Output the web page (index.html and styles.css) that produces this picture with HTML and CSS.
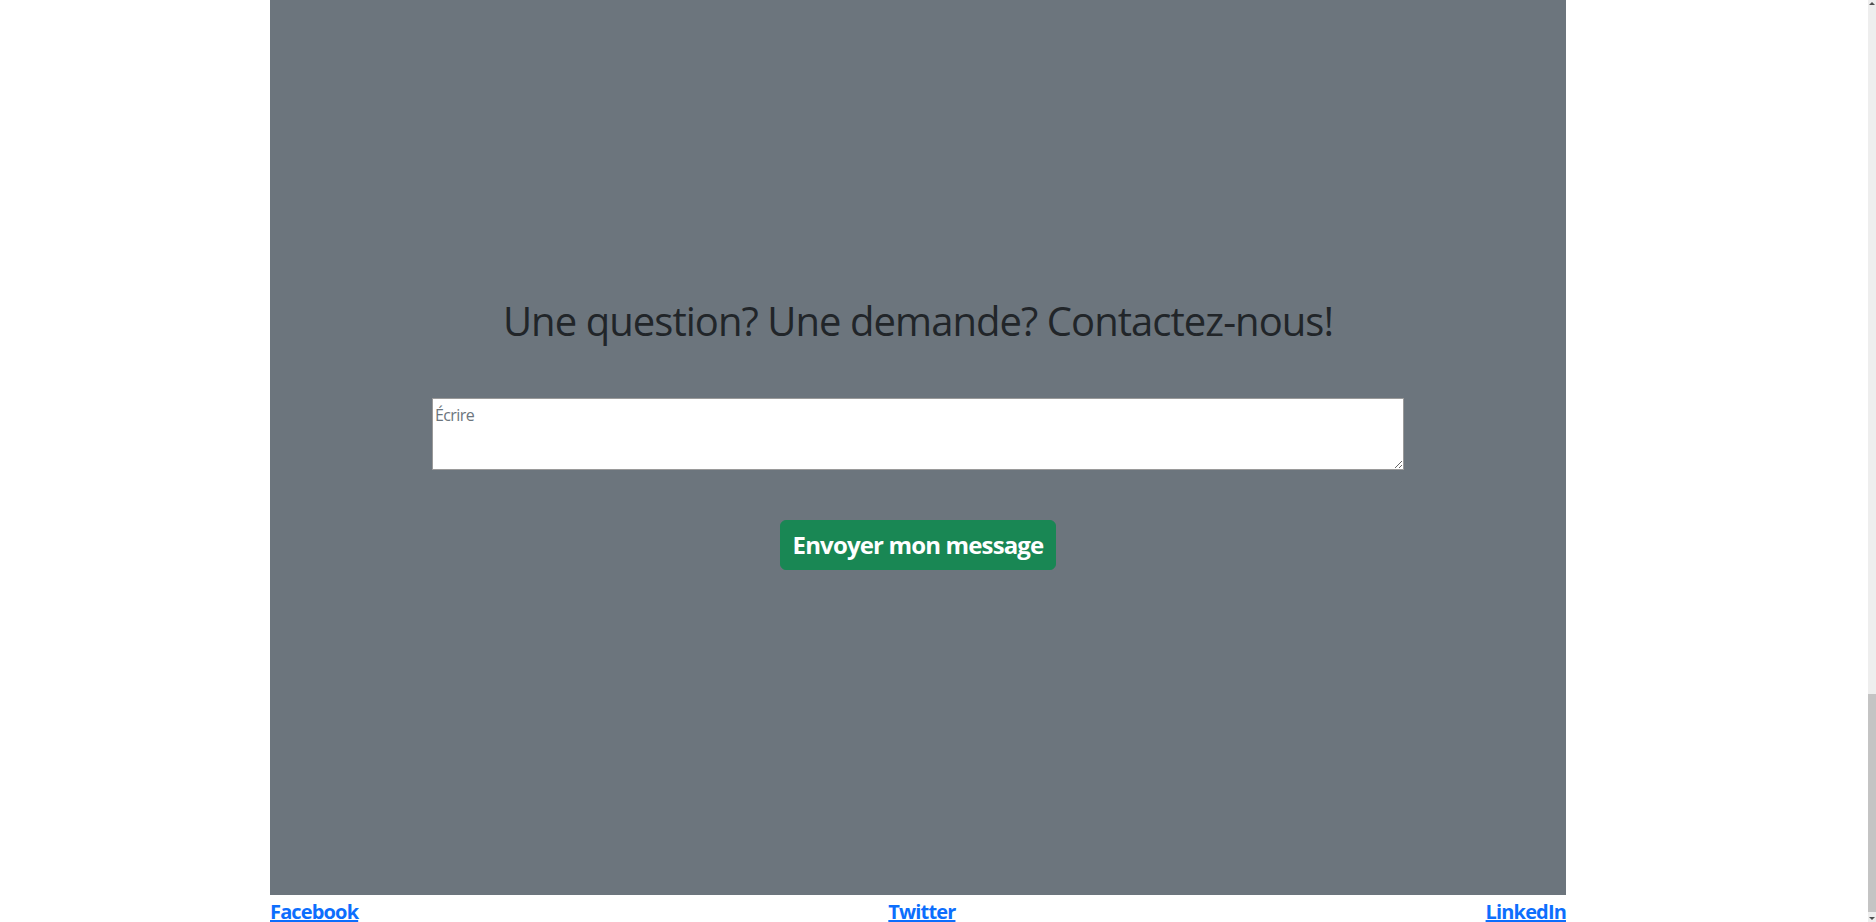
FILE: index.html
```html
<!DOCTYPE html>
<html lang="fr">
<head>
<meta charset="utf-8">
<title>Contact</title>
<link rel="stylesheet" href="styles.css">
</head>
<body>
  <div class="page">
    <section class="contact">
      <h1 class="contact-title">Une question? Une demande? Contactez-nous!</h1>
      <form class="contact-form">
        <textarea class="message" placeholder="Écrire"></textarea>
        <button type="button" class="send">Envoyer mon message</button>
      </form>
    </section>
    <footer class="social">
      <a href="#" class="social-link">Facebook</a>
      <a href="#" class="social-link">Twitter</a>
      <a href="#" class="social-link">LinkedIn</a>
    </footer>
  </div>
  <div class="scrollbar" aria-hidden="true">
    <span class="arrow arrow-up"></span>
    <span class="thumb"></span>
    <span class="arrow arrow-down"></span>
  </div>
</body>
</html>
```
FILE: styles.css
```css
html, body {
  margin: 0;
  height: 922px;
  overflow: hidden;
  background: #ffffff;
  font-family: "Open Sans", "Noto Sans", sans-serif;
}

.page {
  width: 1296px;
  margin-left: 270px;
}

.contact {
  background: #6c757d;
  height: 895px;
  box-sizing: border-box;
  padding-top: 297px;
  display: flex;
  flex-direction: column;
  align-items: center;
}

.contact-title {
  margin: 0;
  font-size: 40px;
  line-height: 48px;
  font-weight: 400;
  color: #212529;
  letter-spacing: -0.95px;
}

.contact-form {
  width: 972px;
  margin: 53px 0 0;
  display: flex;
  flex-direction: column;
  align-items: center;
}

.message {
  display: block;
  width: 100%;
  height: 72px;
  box-sizing: border-box;
  margin: 0;
  border: 1px solid #9a9a9a;
  border-radius: 0;
  padding: 5px 2px 2px;
  font-family: "Open Sans", "Noto Sans", sans-serif;
  font-size: 16px;
  line-height: 22px;
  letter-spacing: -0.6px;
  color: #212529;
  background: #ffffff;
}

.message::placeholder {
  color: #6c757d;
}

.send {
  margin-top: 50px;
  padding: 6px 12px;
  border: 1px solid #198754;
  border-radius: 6px;
  background: #198754;
  color: #ffffff;
  font-family: "Open Sans", "Noto Sans", sans-serif;
  font-size: 24px;
  line-height: 36px;
  font-weight: 700;
  letter-spacing: -0.85px;
  cursor: pointer;
}

.social {
  display: flex;
  justify-content: space-between;
  padding-top: 7px;
}

.social-link {
  font-size: 20px;
  line-height: 20px;
  font-weight: 700;
  color: #0d6efd;
  text-decoration: underline;
  letter-spacing: -0.85px;
}

.scrollbar {
  position: fixed;
  top: 0;
  right: 0;
  width: 8px;
  height: 922px;
  background: #eeeeee;
}

.thumb {
  position: absolute;
  left: 0;
  top: 694px;
  width: 8px;
  height: 218px;
  background: #c4c4c4;
}

.arrow {
  position: absolute;
  left: 1px;
  width: 0;
  height: 0;
  border-left: 3px solid transparent;
  border-right: 3px solid transparent;
}

.arrow-up {
  top: 2px;
  border-bottom: 3px solid #505050;
}

.arrow-down {
  bottom: 2px;
  border-top: 3px solid #505050;
}
```
